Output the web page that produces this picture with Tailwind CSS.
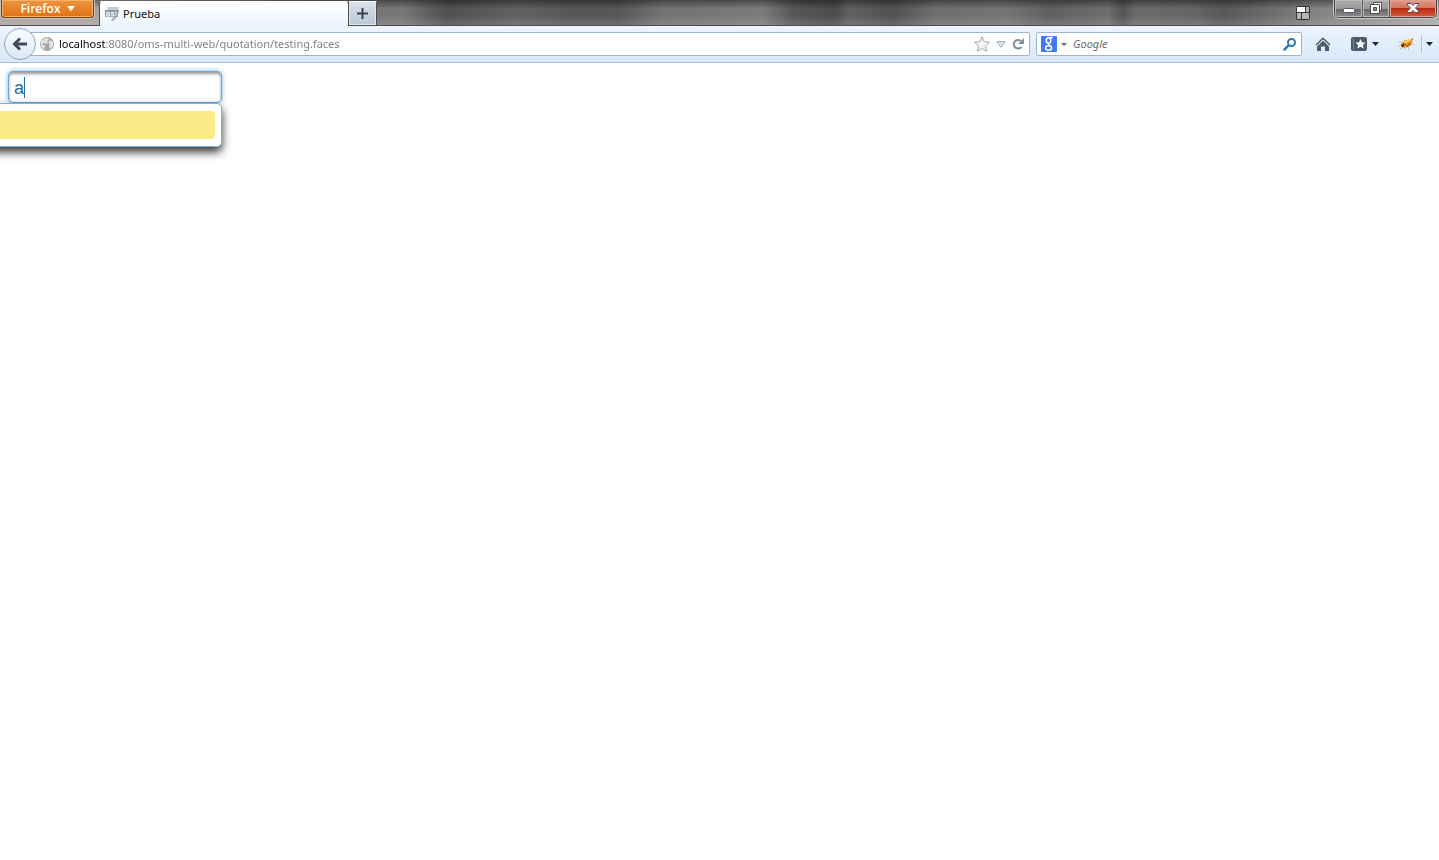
<!DOCTYPE html>
<html lang="es">
<head>
    <meta charset="UTF-8">
    <meta name="viewport" content="width=device-width, initial-scale=1.0">
    <title>Prueba</title>
    <script src="https://cdn.jsdelivr.net/npm/@tailwindcss/browser@4"></script>
</head>
<body class="min-h-screen overflow-x-hidden bg-white font-['Noto_Sans','Open_Sans',sans-serif] text-[11px] text-black">

    <!-- Title bar -->
    <header class="flex h-[26px] items-start border-b border-[#4c4c4c] bg-[linear-gradient(to_bottom,#0006,#0000_35%,#0000_60%,#fff2),linear-gradient(to_right,#aaa5a3_0%,#a8a4a2_7%,#777_24%,#777_28%,#4f5051_31%,#606162_36%,#555657_40%,#565758_43%,#727272_46%,#7b7b7b_53%,#575859_55%,#4a4b4c_58%,#606060_59%,#505151_62%,#6e6e6e_65%,#747474_70%,#606060_73%,#6e6e6e_77%,#555_78%,#6b6b6b_79%,#656565_83%,#585858_85%,#6b6b6b_88%,#808080_91%,#aaa_100%)]">
        <button type="button" class="ml-px flex h-[18px] w-[93px] shrink-0 items-center justify-center gap-[6px] rounded-b-[4px] border border-t-0 border-[#7d3c0b] bg-linear-to-b from-[#ef9440] to-[#df720c] font-['Open_Sans',sans-serif] text-xs font-semibold text-white shadow-[inset_0_0_0_1px_#f7b26c,0_0_0_1px_#c9c3bf]">
            Firefox
            <svg class="h-[5px] w-[8px]" viewBox="0 0 8 5" fill="#fff"><path d="M0 0h8L4 5z"/></svg>
        </button>
        <div class="ml-[5px] mt-px flex h-[25px] w-[250px] shrink-0 items-center gap-[4px] rounded-t-[3px] border-x border-t border-[#4c4c4c] border-t-white bg-linear-to-b from-white to-[#edf4fd] pl-[5px]">
            <svg class="size-[14px]" viewBox="0 0 14 14">
                <path d="M2 0h12l-1 3H3z" fill="#c3cbd3"/>
                <path d="M9 9h4l-5 5H6z" fill="#a5b1bc"/>
                <path d="M0 3h14l-1.500 7H0z" fill="#8c9aa7"/>
                <path d="M1 5.500h3.500v3.500H1.500V7h3M9 5.500H6.500v1.500H9V8.800H6M11 4.500v4.300" fill="none" stroke="#f4f7fa"/>
            </svg>
            <span class="text-[#111]">Prueba</span>
        </div>
        <button type="button" aria-label="Nueva pestaña" class="mt-px flex h-[25px] w-[28px] shrink-0 items-center justify-center border border-l-0 border-[#4c4c4c] border-t-[#edf1f5] bg-linear-to-b from-[#d8e0e8] to-[#bbc8d6] shadow-[inset_0_0_0_1px_#dfe6ed]">
            <svg class="size-[11px]" viewBox="0 0 11 11"><path d="M4.500 0h2v4.500H11v2H6.500V11h-2V6.500H0v-2h4.500z" fill="#364455"/></svg>
        </button>

        <div class="ml-auto flex items-start pr-[2px]">
            <svg class="mr-[24px] mt-[6px] size-[14px]" viewBox="0 0 14 14">
                <rect width="14" height="14" rx="2" fill="#333"/>
                <path d="M1 1h8v5H1z" fill="#fff"/>
                <path d="M10 1h3v5h-3zM1 7h4v6H1zM6 7h7v6H6z" fill="#b5b5b5"/>
            </svg>
            <div class="flex h-[18px] overflow-hidden rounded-b-[5px] border border-t-0 border-[#454545] shadow-[0_0_0_1px_#c8c8c8]">
                <button type="button" aria-label="Minimizar" class="flex w-[28px] items-center justify-center border-r border-[#5c5c5c] bg-[linear-gradient(#aaa,#999_50%,#636363_51%,#8f8f8f)] pt-[3px] shadow-[inset_0_0_0_1px_#bbb]">
                    <svg class="h-[5px] w-[12px]" viewBox="0 0 12 5"><rect x=".5" y=".5" width="11" height="4" rx="1" fill="#fff" stroke="#545566"/></svg>
                </button>
                <button type="button" aria-label="Restaurar" class="flex w-[27px] items-center justify-center border-r border-[#5c5c5c] bg-[linear-gradient(#aaa,#999_50%,#636363_51%,#8f8f8f)] pb-[1px] shadow-[inset_0_0_0_1px_#bbb]">
                    <svg class="size-[12px]" viewBox="0 0 12 12" stroke="#4b4c5e">
                        <path d="M3.500.5h8v8h-8z" fill="#fff"/>
                        <path d="M.5 2.500h9v9h-9z" fill="#fff"/>
                        <path d="M3.500 5.500h3v3h-3z" fill="#888"/>
                    </svg>
                </button>
                <button type="button" aria-label="Cerrar" class="flex w-[46px] items-center justify-center bg-[linear-gradient(#df9a89,#d27762_45%,#b92c14_50%,#d45b3b)] pb-[1px] shadow-[inset_0_0_0_1px_#e4a092]">
                    <svg class="h-[10px] w-[12px]" viewBox="0 0 12 10"><path d="M.5.5h3.500l2 2 2-2h3.500v1.500L8.500 5l3 3v1.500H8l-2-2-2 2H.5V8l3-3-3-3z" fill="#fff" stroke="#5b4354"/></svg>
                </button>
            </div>
        </div>
    </header>

    <!-- Navigation toolbar -->
    <nav class="flex h-[37px] items-center border-b border-[#a9bfd3] bg-linear-to-b from-[#edf4fd] to-[#d8e8f8] pl-[4px]">
        <button type="button" aria-label="Atrás" class="z-10 flex size-[32px] shrink-0 items-center justify-center rounded-full border border-[#8fa5bd] bg-linear-to-b from-[#f9fcff] to-[#dce8f5]">
            <svg class="h-[14px] w-[16px]" viewBox="0 0 16 14"><path d="M8 1.500 2.500 7 8 12.500M3 7h12" fill="none" stroke="#3e4b5b" stroke-width="3"/></svg>
        </button>
        <form class="-ml-[6px] flex h-[24px] flex-1 items-center rounded-r-[2px] border border-l-0 border-[#a0b5cc] bg-white pl-[10px] pr-[5px]">
            <svg class="size-[14px] shrink-0" viewBox="0 0 14 14">
                <circle cx="7" cy="7" r="7" fill="#a5a5a5"/>
                <path d="M1 4 4 1.500l4-.5 1 2-2 1 1 2-2 1-2-1-2 1 3 2-1 4-3-4zM10 3l3 2v4l-3 3-1-3 1-2-2-1z" fill="#e2e2e2"/>
            </svg>
            <!-- Host is dark, the rest of the address is dimmed -->
            <input type="text" aria-label="Dirección" value="localhost:8080/oms-multi-web/quotation/testing.faces" class="ml-[5px] min-w-0 flex-1 bg-[linear-gradient(to_right,#000_47px,#7b7b7b_47px)] bg-clip-text text-transparent outline-none">
            <button type="button" aria-label="Añadir a marcadores">
                <svg class="size-[16px]" viewBox="0 0 16 16"><path d="m8 .8 2.200 4.900 5.200.6-3.900 3.600 1.100 5.300L8 12.500l-4.600 2.700 1.100-5.300L.6 6.300l5.200-.6z" fill="#f5f5f5" stroke="#a8a8a8"/></svg>
            </button>
            <button type="button" aria-label="Historial" class="ml-[6px]">
                <svg class="h-[7px] w-[10px]" viewBox="0 0 10 7"><path d="M.8.5h8.400L5 6.300z" fill="#dce3ea" stroke="#a4afba"/></svg>
            </button>
            <button type="button" aria-label="Recargar" class="ml-[6px]">
                <svg class="size-[12px]" viewBox="0 0 12 12"><path d="M8.800 2.900A4.300 4.300 0 1 0 9.500 8.800" fill="none" stroke="#7d90a3" stroke-width="2"/><path d="M12 0v6H6z" fill="#7d90a3"/></svg>
            </button>
        </form>
        <form class="ml-[6px] flex h-[24px] w-[266px] shrink-0 items-center rounded-[2px] border border-[#a0b5cc] bg-white pl-[4px] pr-[5px]">
            <button type="button" aria-label="Motor de búsqueda" class="flex items-center gap-[4px]">
                <svg class="size-[16px]" viewBox="0 0 16 16">
                    <rect width="16" height="16" rx="1" fill="#4079f6"/>
                    <g fill="none" stroke="#fff"><ellipse cx="7.500" cy="4.500" rx="2.300" ry="2.700" stroke-width="1.600"/><path d="M8 1.500h4M8.500 7.200c-2 1.500 0 1.700 1.500 2.800" stroke-width="1.300"/><ellipse cx="7.600" cy="12" rx="3" ry="2.200" stroke-width="1.500"/></g>
                </svg>
                <svg class="h-[3px] w-[6px]" viewBox="0 0 6 3"><path d="M0 0h6L3 3z" fill="#666"/></svg>
            </button>
            <input type="text" aria-label="Buscar" placeholder="Google" class="ml-[6px] min-w-0 flex-1 italic outline-none placeholder:text-[#6d6d6d]">
            <button type="submit" aria-label="Buscar en Google">
                <svg class="size-[13px]" viewBox="0 0 13 13" fill="none" stroke="#2f74b5"><circle cx="8.500" cy="4.500" r="3.500" stroke-width="2"/><path d="M5.800 7.200.8 12.200" stroke-width="2.500"/></svg>
            </button>
        </form>
        <button type="button" aria-label="Inicio" class="ml-[13px] shrink-0">
            <svg class="h-[14px] w-[16px]" viewBox="0 0 16 14" fill="#4b5a68"><path d="M8 3.700 14 9.500V14h-4V9.500H6V14H2V9.500z"/><path d="M1 8 8 1.200 15 8" fill="none" stroke="#4b5a68" stroke-width="1.500"/></svg>
        </button>
        <button type="button" aria-label="Marcadores" class="ml-[20px] flex shrink-0 items-center gap-[5px]">
            <svg class="h-[14px] w-[16px]" viewBox="0 0 16 14"><rect width="16" height="14" rx="2" fill="#4b5a68"/><path d="M2.500 1v12" stroke="#788590"/><path d="m9.500 2 1.500 3.300 3.500.4-2.600 2.300.7 3.600-3.100-1.800-3.100 1.800.7-3.600-2.600-2.300L8 5.300z" fill="#fff"/></svg>
            <svg class="h-[4px] w-[7px]" viewBox="0 0 7 4"><path d="M0 0h7L3.500 4z" fill="#1d2733"/></svg>
        </button>
        <button type="button" aria-label="Firebug" class="ml-[19px] flex shrink-0 items-center gap-[7px]">
            <svg class="h-[14px] w-[16px]" viewBox="0 0 16 14">
                <path d="M1 5h3l2 2M0 9l4-1M2 12l3-2M7 13l-1-3M11 13l-1-3M6 3l1 3M14 7l2 1" fill="none" stroke="#c9bba8"/>
                <ellipse cx="9" cy="6.500" rx="5.800" ry="3.500" transform="rotate(-24 9 6.500)" fill="#e99a22"/>
                <ellipse cx="9" cy="4.500" rx="3.500" ry="1" transform="rotate(-24 9 4.500)" fill="#ffd063"/>
                <path d="M3.500 7.500 6 6.500v3L4 10zM7 7l1 1M10 5.500l1 1.500M8 9.500l5-2.500" fill="#493018" stroke="#91410a"/>
                <path d="m13 2 2-1v3z" fill="#d7701a"/>
            </svg>
            <span class="h-[18px] w-px bg-[#b6c3d0]"></span>
        </button>
        <button type="button" aria-label="Opciones de Firebug" class="ml-[4px] mr-[6px] shrink-0">
            <svg class="h-[4px] w-[7px]" viewBox="0 0 7 4"><path d="M0 0h7L3.500 4z" fill="#1d2733"/></svg>
        </button>
    </nav>

    <!-- Page: autocomplete field with its suggestion panel -->
    <main class="pt-[8px]">
        <div class="relative ml-[8px] w-[214px]">
            <input type="text" aria-label="Autocompletar" value="a" class="block h-[32px] w-full rounded-[5px] border border-[#6ba5d8] bg-white px-[5px] pt-[2px] font-['Liberation_Sans',sans-serif] text-lg text-[#2a6b9f] caret-transparent shadow-[0_0_5px_#78b4e8,inset_0_2px_3px_#999] outline-none">
            <span class="absolute left-[16px] top-[6px] h-[21px] w-px bg-[#2a6b9f]"></span>
            <ul class="absolute right-0 top-full w-[240px] rounded-[5px] border border-[#7fb1dc] bg-white px-[6px] py-[7px] shadow-[0_5px_10px_#000c]">
                <li class="h-[28px] rounded-[4px] bg-[#fbec88]"></li>
            </ul>
        </div>
    </main>
</body>
</html>
